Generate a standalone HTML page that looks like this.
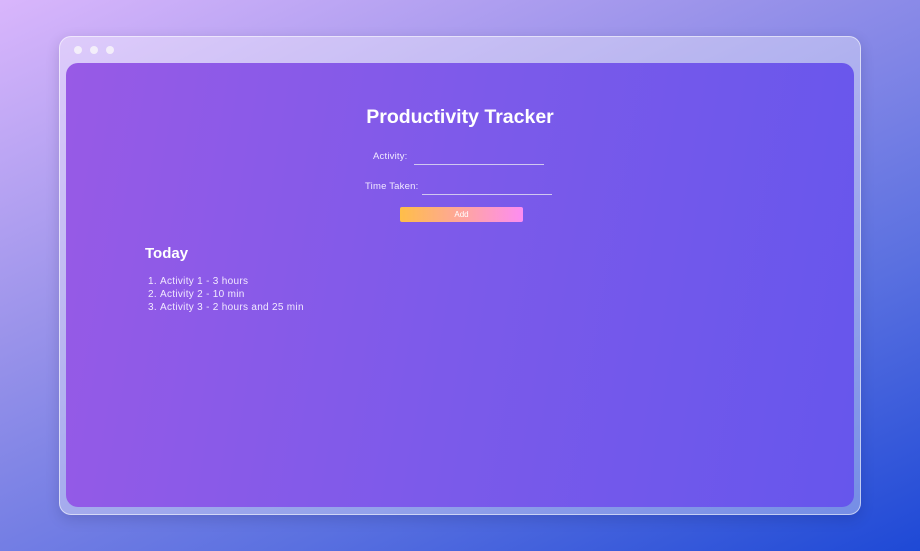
<!DOCTYPE html>
<html><head><style>
html,body{margin:0;padding:0;width:920px;height:551px;overflow:hidden}
body{background:linear-gradient(155deg,#d9b6fc 0%,#9a93ea 35%,#5a70e0 70%,#1e49d6 100%);font-family:"Liberation Sans",sans-serif;position:relative}
.frame{position:absolute;left:59px;top:36px;width:800px;height:477px;border-radius:12px;background:rgba(255,255,255,0.35);border:1px solid rgba(255,255,255,0.55);box-shadow:0 4px 14px rgba(0,0,40,0.15)}
.dot{position:absolute;top:9px;width:8px;height:8px;border-radius:50%;background:#f3eefa}
.inner{position:absolute;left:66px;top:63px;width:788px;height:444px;border-radius:12px;background:linear-gradient(100deg,#985ae6 0%,#7c5aea 50%,#6656ec 100%);color:#fff}
h1{position:absolute;left:0;right:0;top:43px;margin:0;text-align:center;font-size:19.5px;font-weight:bold}
.lbl{position:absolute;font-size:9.5px;color:#f2eaff;letter-spacing:0.2px}
.line{position:absolute;height:1px;background:#d0c8f0}
.btn{position:absolute;left:334px;top:144px;width:123px;height:15px;border-radius:2px;background:linear-gradient(90deg,#ffbe48,#fd8df2);font-size:8px;text-align:center;line-height:15px;color:#fff}
h2{position:absolute;left:79px;top:182px;margin:0;font-size:15px;font-weight:bold}
ol{position:absolute;left:79px;top:212px;margin:0;padding-left:15px;font-size:10px;line-height:13px;color:#f2eaff;letter-spacing:0.3px}
</style></head><body>
<div class="frame"><div class="dot" style="left:14px"></div><div class="dot" style="left:30px"></div><div class="dot" style="left:46px"></div></div>
<div class="inner">
<h1>Productivity Tracker</h1>
<div class="lbl" style="left:307px;top:88px">Activity:</div>
<div class="line" style="left:348px;top:101px;width:130px"></div>
<div class="lbl" style="left:299px;top:118px">Time Taken:</div>
<div class="line" style="left:356px;top:131px;width:130px"></div>
<div class="btn">Add</div>
<h2>Today</h2>
<ol><li>Activity 1 - 3 hours</li><li>Activity 2 - 10 min</li><li>Activity 3 - 2 hours and 25 min</li></ol>
</div>
</body></html>
